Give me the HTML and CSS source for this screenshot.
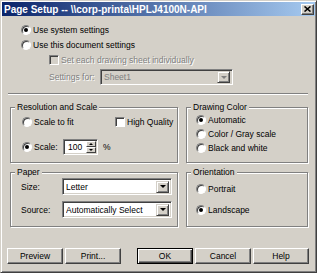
FILE: index.html
```html
<!DOCTYPE html>
<html>
<head>
<meta charset="utf-8">
<title>Page Setup</title>
<link rel="stylesheet" href="styles.css">
</head>
<body>
<div class="window">
  <div class="titlebar">
    <span class="title">Page Setup -- \\corp-printa\HPLJ4100N-API</span>
    <span class="close"><svg width="7" height="6" viewBox="0 0 7 6"><path d="M0.5 0.5 L6.5 5.5 M6.5 0.5 L0.5 5.5" stroke="#000" stroke-width="1.6"/></svg></span>
  </div>
  <div class="body">
    <div class="top">
      <div class="row"><span class="radio on"></span><span class="txt">Use system settings</span></div>
      <div class="row"><span class="radio"></span><span class="txt">Use this document settings</span></div>
      <div class="row indent disabled"><span class="check"></span><span class="txt">Set each drawing sheet individually</span></div>
      <div class="row indent settings disabled">
        <span class="lbl-for">Settings for:</span>
        <div class="combo combo-dis"><span class="combo-text">Sheet1</span><span class="drop"><span class="arrow"></span></span></div>
      </div>
    </div>
    <div class="sep"></div>
    <div class="groups">
      <div class="col col-left">
        <div class="group g-res">
          <span class="legend">Resolution and Scale</span>
          <div class="grow">
            <div class="opt opt-fit"><span class="radio"></span><span class="txt">Scale to fit</span></div>
            <div class="opt"><span class="check"></span><span class="txt">High Quality</span></div>
          </div>
          <div class="grow grow-scale">
            <div class="opt"><span class="radio on"></span><span class="txt lbl-scale">Scale:</span></div>
            <div class="spin"><span class="spin-text">100</span><span class="spin-btns"><span class="sbtn"><span class="up"></span></span><span class="sbtn"><span class="down"></span></span></span></div>
            <span class="pct">%</span>
          </div>
        </div>
        <div class="group g-paper">
          <span class="legend">Paper</span>
          <div class="prow"><span class="plbl">Size:</span><div class="combo combo-w"><span class="combo-text">Letter</span><span class="drop"><span class="arrow"></span></span></div></div>
          <div class="prow"><span class="plbl">Source:</span><div class="combo combo-w"><span class="combo-text">Automatically Select</span><span class="drop"><span class="arrow"></span></span></div></div>
        </div>
      </div>
      <div class="col col-right">
        <div class="group g-color">
          <span class="legend">Drawing Color</span>
          <div class="crow"><span class="radio on"></span><span class="txt">Automatic</span></div>
          <div class="crow"><span class="radio"></span><span class="txt">Color / Gray scale</span></div>
          <div class="crow"><span class="radio"></span><span class="txt">Black and white</span></div>
        </div>
        <div class="group g-orient">
          <span class="legend">Orientation</span>
          <div class="orow"><span class="radio"></span><span class="txt">Portrait</span></div>
          <div class="orow"><span class="radio on"></span><span class="txt">Landscape</span></div>
        </div>
      </div>
    </div>
    <div class="buttons">
      <span class="btn">Preview</span>
      <span class="btn">Print...</span>
      <span class="btn btn-default ok">OK</span>
      <span class="btn">Cancel</span>
      <span class="btn">Help</span>
    </div>
  </div>
</div>
</body>
</html>
```
FILE: styles.css
```css
* { box-sizing: border-box; }
html, body { margin: 0; padding: 0; background: #d4d0c8; }
body {
  font-family: "Liberation Sans", Arial, sans-serif;
  font-size: 8.5px;
  color: #000;
}
.window {
  width: 317px;
  height: 273px;
  border: 1px solid;
  border-color: #d4d0c8 #404040 #404040 #d4d0c8;
  box-shadow: inset 1px 1px #fff, inset -1px -1px #808080;
  padding: 1px;
  background: #d4d0c8;
  display: flex;
  flex-direction: column;
}
.titlebar {
  height: 14px;
  background: linear-gradient(to right, #0a246a, #a6caf0);
  display: flex;
  align-items: center;
  justify-content: space-between;
  padding: 0 1px 0 2px;
}
.title {
  color: #fff;
  font-weight: bold;
  font-size: 10px;
  white-space: nowrap;
}
.close {
  width: 13px;
  height: 11px;
  background: #d4d0c8;
  border: 1px solid;
  border-color: #fff #404040 #404040 #fff;
  box-shadow: inset -1px -1px #808080;
  display: flex;
  align-items: center;
  justify-content: center;
}
.close svg { display: block; }
.body {
  flex: 1;
  display: flex;
  flex-direction: column;
}
.top {
  padding: 6px 0 0 19px;
  display: flex;
  flex-direction: column;
}
.row {
  height: 15px;
  display: flex;
  align-items: center;
}
.txt { margin-left: 2px; white-space: nowrap; }
.indent { padding-left: 28px; }
.disabled { color: #808080; text-shadow: 1px 1px #fff; }
.settings { height: 16px; margin-top: 2px; }
.lbl-for { width: 51px; }
.radio {
  width: 10px;
  height: 10px;
  flex: none;
  border-radius: 50%;
  background: #fff;
  border: 1px solid;
  border-color: #808080 #fff #fff #808080;
  box-shadow: inset 1px 1px #404040;
  position: relative;
}
.radio.on::after {
  content: "";
  position: absolute;
  left: 2px;
  top: 2px;
  width: 4px;
  height: 4px;
  border-radius: 50%;
  background: #000;
}
.check {
  width: 10px;
  height: 10px;
  flex: none;
  background: #fff;
  border: 1px solid;
  border-color: #808080 #fff #fff #808080;
  box-shadow: inset 1px 1px #404040;
}
.disabled .check { background: #d4d0c8; }
.combo {
  height: 16px;
  display: flex;
  align-items: center;
  background: #fff;
  border: 1px solid;
  border-color: #808080 #fff #fff #808080;
  box-shadow: inset 1px 1px #404040, inset -1px -1px #d4d0c8;
  padding: 2px 2px 2px 3px;
  color: #000;
  text-shadow: none;
}
.combo-dis { width: 133px; background: #d4d0c8; color: #808080; }
.combo-text { flex: 1; white-space: nowrap; overflow: hidden; }
.drop {
  width: 13px;
  height: 12px;
  flex: none;
  background: #d4d0c8;
  border: 1px solid;
  border-color: #d4d0c8 #404040 #404040 #d4d0c8;
  box-shadow: inset 1px 1px #fff, inset -1px -1px #808080;
  display: flex;
  align-items: center;
  justify-content: center;
}
.arrow {
  width: 0;
  height: 0;
  border-left: 3px solid transparent;
  border-right: 3px solid transparent;
  border-top: 3px solid #000;
}
.combo-dis .arrow { border-top-color: #808080; }
.sep {
  margin: 8px 0 0 6px;
  width: 300px;
  height: 2px;
  border-top: 1px solid #808080;
  border-bottom: 1px solid #fff;
}
.groups {
  margin-top: 12px;
  padding-left: 8px;
  display: flex;
  gap: 8px;
}
.col { display: flex; flex-direction: column; gap: 9px; }
.col-left { width: 168px; }
.col-right { width: 122px; }
.group {
  position: relative;
  border: 1px solid #808080;
  box-shadow: inset 1px 1px #fff, 1px 1px #fff;
}
.legend {
  position: absolute;
  top: -6px;
  left: 4px;
  padding: 0 2px;
  background: #d4d0c8;
  line-height: 11px;
  white-space: nowrap;
}
.g-res { height: 56px; padding: 6px 0 0 11px; }
.grow { display: flex; align-items: center; height: 15px; }
.opt { display: flex; align-items: center; }
.opt-fit { width: 93px; }
.grow-scale { margin-top: 10px; height: 16px; }
.lbl-scale { width: 29px; }
.spin {
  width: 35px;
  height: 16px;
  background: #fff;
  border: 1px solid;
  border-color: #808080 #fff #fff #808080;
  box-shadow: inset 1px 1px #404040, inset -1px -1px #d4d0c8;
  display: flex;
  align-items: center;
  padding: 2px 1px 2px 4px;
}
.spin-text { flex: 1; }
.spin-btns { display: flex; flex-direction: column; width: 10px; height: 12px; }
.sbtn {
  flex: 1;
  background: #d4d0c8;
  border: 1px solid;
  border-color: #fff #404040 #404040 #fff;
  display: flex;
  align-items: center;
  justify-content: center;
}
.up { width: 0; height: 0; border-left: 2px solid transparent; border-right: 2px solid transparent; border-bottom: 2px solid #000; }
.down { width: 0; height: 0; border-left: 2px solid transparent; border-right: 2px solid transparent; border-top: 2px solid #000; }
.pct { margin-left: 5px; }
.g-paper { height: 55px; padding: 5px 0 0 10px; }
.prow { display: flex; align-items: center; height: 17px; margin-bottom: 6px; }
.plbl { width: 41px; }
.combo-w { width: 110px; height: 17px; }
.g-color { height: 56px; padding: 5px 0 0 9px; }
.crow { display: flex; align-items: center; height: 14px; }
.g-orient { height: 55px; padding: 8px 0 0 9px; }
.orow { display: flex; align-items: center; height: 15px; margin-bottom: 6px; }
.buttons {
  margin-top: 21px;
  padding-left: 5px;
  display: flex;
  gap: 2px;
}
.btn {
  width: 56px;
  height: 16px;
  display: flex;
  align-items: center;
  justify-content: center;
  background: #d4d0c8;
  border: 1px solid;
  border-color: #fff #404040 #404040 #fff;
  box-shadow: inset -1px -1px #808080;
}
.ok { margin-left: 14px; }
.btn-default {
  border-color: #000;
  box-shadow: inset 1px 1px #fff, inset -1px -1px #404040, inset -2px -2px #808080;
}
```
